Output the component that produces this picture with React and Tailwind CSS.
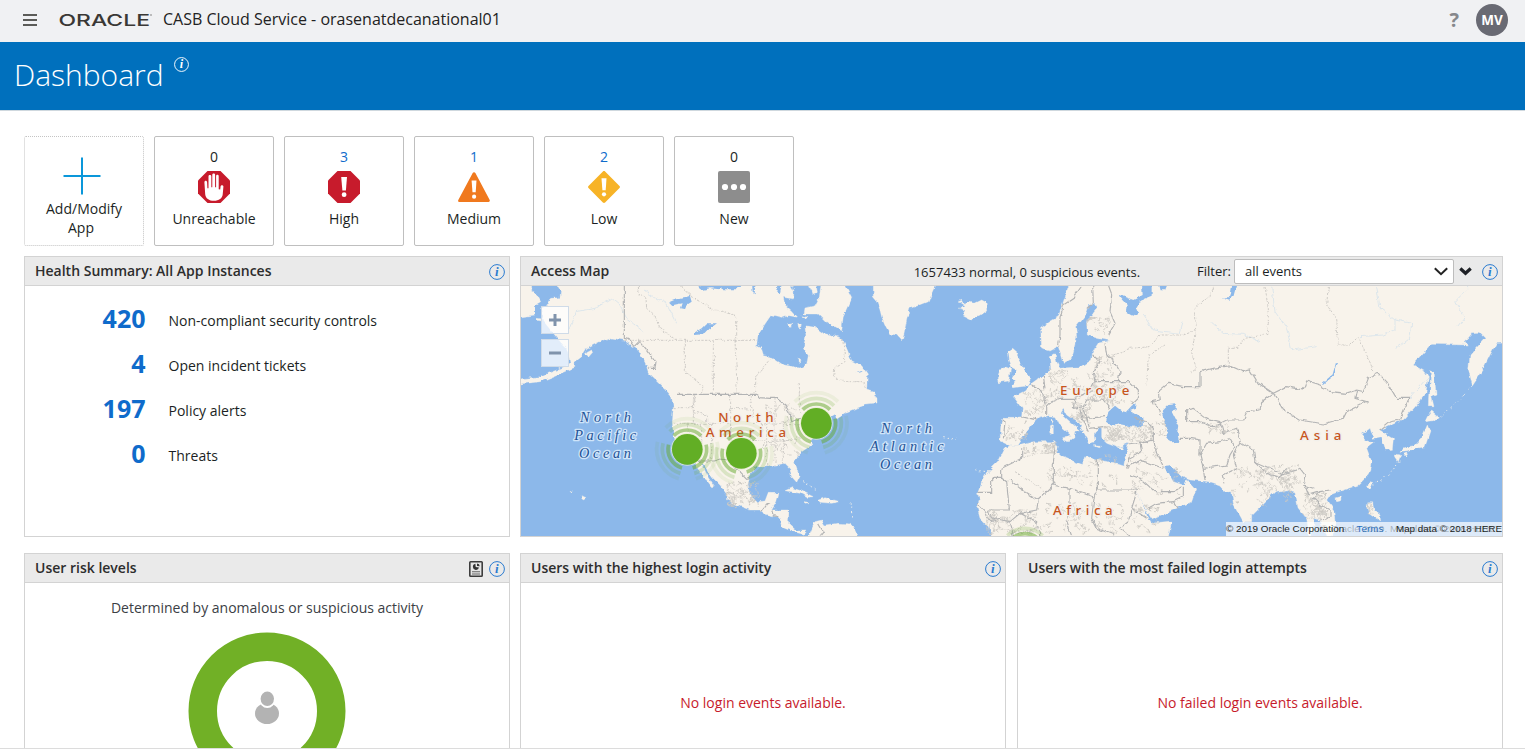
import React from "react";

const WATER = "#8cb8ea";
const LAND = "#f8f3eb";

/* ---------- small icons ---------- */

function InfoIcon({ size = 16, color = "#2a7bd0", className = "" }) {
  return (
    <svg width={size} height={size} viewBox="0 0 16 16" className={`shrink-0 ${className}`}>
      <circle cx="8" cy="8" r="7.4" fill="none" stroke={color} strokeWidth="1" />
      <text x="7.9" y="12.2" textAnchor="middle" fontFamily="Liberation Serif, serif" fontStyle="italic" fontWeight="700" fontSize="13" fill={color}>i</text>
    </svg>
  );
}

function ReportIcon() {
  return (
    <svg width="14" height="16" viewBox="0 0 14 16" className="shrink-0">
      <rect x="0.8" y="0.8" width="12.4" height="14.4" rx="0.8" fill="#e6e6e6" stroke="#3d3d3d" strokeWidth="1.6" />
      <path d="M6.4 2.8a3.1 3.1 0 1 0 3.6 3.8L6.7 6z" fill="#333" />
      <path d="M8 2.4a3 3 0 0 1 2.7 2.9L8 5z" fill="#333" />
      <path d="M3 10.7h8M3 13h8" stroke="#666" strokeWidth="1.1" />
    </svg>
  );
}

function PlusIcon() {
  return (
    <svg width="38" height="38" viewBox="0 0 38 38">
      <path d="M19 0.5v37M0.5 19h37" stroke="#0a97da" strokeWidth="2" />
    </svg>
  );
}

const OCTAGON = "M9.5 0h13L32 9.5v13L22.5 32h-13L0 22.5v-13z";

function HandIcon() {
  return (
    <svg width="32" height="32" viewBox="0 0 32 32">
      <path d={OCTAGON} fill="#c71b2c" />
      <path d="M6.4 11.2c0-2 2.6-2 2.7 0l.3 6h1.1V5.3c0-1.9 2.8-1.9 2.8 0v11h1V3.8c0-1.9 2.8-1.9 2.8 0v12.5h1V5c0-1.8 2.6-1.8 2.6 0v13.2l1.5.3.4-3.2c.3-1.7 3-1.4 2.8.4l-.7 7.8c-.3 3.8-3.9 6.3-8.7 6.3-5.1 0-8.4-2.500-8.800-6.600z" fill="#fff" />
    </svg>
  );
}

function HighIcon() {
  return (
    <svg width="32" height="32" viewBox="0 0 32 32">
      <path d={OCTAGON} fill="#c71b2c" />
      <path d="M13.200 6h5.800l-1.100 13.500h-3.500z" fill="#fff" />
      <circle cx="16.100" cy="23.700" r="2.400" fill="#fff" />
    </svg>
  );
}

function MediumIcon() {
  return (
    <svg width="32" height="32" viewBox="0 0 32 32">
      <path d="M14.700 2c.5-1.100 2.100-1.100 2.700 0l14.300 27c.4.800-.1 1.900-1.100 1.900H1.400c-1 0-1.600-1.100-1.100-1.900z" fill="#f0791e" />
      <path d="M13.600 9.500h4.900l-.8 11.700h-3.200z" fill="#fff" />
      <circle cx="16.100" cy="25.700" r="2.100" fill="#fff" />
    </svg>
  );
}

function LowIcon() {
  return (
    <svg width="32" height="32" viewBox="0 0 32 32">
      <path d="M14.900.5c.6-.6 1.600-.6 2.200 0l14.400 14.400c.6.600.6 1.600 0 2.200L17.100 31.500c-.6.600-1.600.6-2.200 0L.5 17.100c-.6-.6-.6-1.600 0-2.200z" fill="#f7b327" />
      <path d="M13.500 7.300h5l-.8 12h-3.300z" fill="#fff" />
      <circle cx="16" cy="23.300" r="2.100" fill="#fff" />
    </svg>
  );
}

function NewIcon() {
  return (
    <svg width="32" height="32" viewBox="0 0 32 32">
      <rect width="32" height="32" rx="2" fill="#8d8d8d" />
      <circle cx="7" cy="16" r="3.100" fill="#fff" />
      <circle cx="16" cy="16" r="3.100" fill="#fff" />
      <circle cx="25" cy="16" r="3.100" fill="#fff" />
    </svg>
  );
}

/* ---------- map data (three map units per pixel) ---------- */

const LANDS = [
  // Siberia tip
  "3,93 35,93 35,110 50,118 62,140 45,150 45,180 3,188",
  "50,190 68,192 65,198 52,196",
  // North and Central America
  "100,93 122,108 120,128 95,130 85,150 62,160 72,200 100,235 125,265 140,280 146,300 150,325 110,345 60,365 3,374 3,389 60,380 110,360 165,337 160,325 185,305 200,280 230,265 245,257 270,248 310,255 330,268 350,280 365,305 380,335 385,352 430,395 455,425 460,460 457,500 460,540 480,590 500,625 525,628 540,650 550,668 560,675 575,695 583,693 565,665 548,635 540,620 552,630 575,665 600,690 618,715 620,735 650,750 690,765 720,765 735,778 770,785 785,800 790,818 820,830 850,838 858,828 830,828 805,805 807,765 755,765 770,740 777,712 745,712 735,738 710,740 690,720 684,690 690,655 705,636 735,632 770,630 795,625 810,640 815,665 830,682 838,665 823,620 845,590 875,570 870,555 900,530 925,490 945,478 950,492 985,470 1010,460 1035,450 1068,447 1068,428 1060,412 1040,405 1042,357 1025,332 995,317 980,280 968,252 960,247 910,235 885,217 855,212 858,242 850,277 865,302 860,327 840,339 790,330 755,307 730,302 723,279 710,272 713,242 735,207 752,182 785,190 805,182 830,187 815,170 795,152 790,127 820,132 822,107 800,93",
  // Baffin Island and the islands of Hudson Strait
  "905,93 898,127 885,152 855,159 852,177 895,177 920,202 965,227 970,182 985,150 995,127 965,93",
  "862,93 876,118 892,112 885,93",
  "804,207 818,203 815,217 806,215", "834,210 844,208 841,222 835,220", "846,182 860,187 855,194", "836,312 844,318 838,322",
  // Greenland and Iceland
  "1060,93 1060,125 1070,137 1080,165 1085,185 1098,215 1110,237 1130,240 1145,257 1152,235 1160,195 1170,160 1200,150 1225,140 1235,115 1255,93",
  "1315,140 1330,150 1318,160 1335,165 1330,180 1355,193 1380,180 1400,165 1398,142 1385,135 1365,145 1345,142 1330,148 1325,136",
  // Caribbean and South America
  "795,707 815,698 845,708 880,725 862,727 840,715", "895,735 915,728 957,740 935,745 900,742", "852,740 868,742 860,745",
  "855,843 885,800 905,795 915,810 955,805 985,806 1000,815 1025,843",
  "183,722 195,728 192,735 186,732", "150,706 158,708 155,711",
  "200,290 215,282 218,292 205,307 197,300",
  // Africa
  "1425,843 1405,815 1380,790 1372,760 1378,735 1373,715 1385,680 1400,655 1435,620 1455,580 1470,572 1505,570 1540,560 1600,560 1615,575 1610,590 1625,605 1685,628 1700,605 1730,615 1795,625 1818,632 1840,690 1860,730 1880,780 1893,805 1955,798 1940,843",
  // Eurasia
  "1445,490 1485,490 1505,485 1507,462 1480,425 1520,405 1535,385 1570,360 1593,345 1588,305 1604,295 1610,320 1620,340 1685,335 1700,325 1715,315 1718,290 1735,264 1770,258 1732,250 1702,240 1700,200 1732,160 1725,148 1705,150 1695,180 1667,215 1670,250 1655,310 1630,325 1615,275 1590,288 1565,282 1562,220 1590,200 1615,185 1630,140 1655,93 2946,93 2946,260 2930,262 2910,300 2890,340 2857,390 2846,345 2850,300 2895,250 2880,235 2855,236 2835,260 2845,270 2735,268 2680,330 2715,350 2725,365 2718,410 2690,450 2655,490 2635,500 2580,525 2600,540 2620,552 2617,583 2597,585 2585,545 2560,550 2550,520 2523,540 2535,555 2560,565 2540,580 2555,620 2545,660 2515,690 2455,710 2430,720 2420,735 2445,770 2448,800 2430,843 2415,825 2398,795 2385,790 2370,843 2360,790 2335,760 2325,710 2300,705 2265,710 2240,735 2215,760 2195,780 2195,800 2170,800 2140,745 2135,710 2110,712 2100,690 2070,680 2010,675 1985,665 1950,630 1932,632 1960,680 1990,690 2000,675 2027,705 2015,740 1970,760 1895,795 1880,770 1850,710 1815,645 1812,625 1825,565 1795,578 1760,565 1745,550 1745,520 1735,515 1722,540 1725,560 1710,565 1690,530 1670,500 1640,480 1630,462 1622,475 1650,500 1678,525 1665,525 1662,545 1640,560 1635,545 1655,540 1620,510 1608,485 1585,482 1555,490 1540,505 1520,530 1495,570 1470,572 1440,558 1442,520",
  // British Isles
  "1462,290 1478,280 1495,295 1490,305 1505,330 1522,355 1532,370 1525,392 1480,398 1475,390 1490,380 1478,370 1490,345 1472,335 1465,315",
  "1440,345 1455,335 1472,342 1465,378 1435,383 1432,368",
  // Mediterranean islands
  "1588,515 1600,512 1600,535 1590,538", "1592,492 1600,495 1597,508", "1625,548 1655,545 1648,560 1630,556", "1720,572 1745,574 1738,578", "1795,580 1810,574 1805,584",
  // Japan, Sakhalin, Taiwan, Philippines, Hainan
  "2732,347 2742,350 2748,420 2735,425 2742,455 2728,455 2730,400",
  "2735,468 2755,485 2740,497 2715,500 2722,485",
  "2722,510 2730,530 2715,575 2690,580 2665,590 2640,592 2650,578 2685,572 2705,550",
  "2625,597 2642,600 2635,620 2628,610", "2648,598 2665,594 2658,604",
  "2548,680 2558,682 2550,705 2543,695",
  "2545,740 2558,740 2562,765 2580,780 2582,797 2560,785 2545,775 2540,755",
  "2445,730 2465,724 2460,738 2450,740",
];

const INLAND_WATER = [
  // White Sea, Ob
  "1795,120 1815,125 1840,135 1868,120 1865,93 1895,93 1895,125 1858,140 1850,160 1855,172 1840,182 1818,170 1820,150",
  "1912,93 1950,93 1935,106 1922,106", "2108,130 2130,130 2140,93 2155,93 2140,125 2128,137",
  // Black Sea, Azov, Caspian
  "1758,500 1765,470 1785,452 1805,468 1820,472 1835,455 1850,445 1848,458 1830,465 1870,490 1872,512 1840,515 1800,508 1775,512",
  "1925,470 1945,450 1970,448 1970,465 1955,470 1975,510 1972,530 1978,560 1955,562 1935,550 1945,530 1935,500",
  // Canadian lakes and Arctic channels
  "450,140 480,128 510,123 515,140 500,150 495,163 480,160 485,145 460,150",
  "520,235 545,220 560,205 588,205 565,222 550,238 525,240",
  "533,97 570,93 620,93 600,103 570,100 545,105", "595,93 672,93 650,103 610,103", "695,93 708,93 704,115 698,110",
  "765,93 788,93 780,115 770,108",
  "1540,520 1545,517 1548,525", "1005,355 1030,344 1020,352",
];

const BORDERS = [
  "313,93 313,250 330,255 345,275 360,260 385,290 408,320 405,340 385,340",
  "468,418 708,418 720,428 750,430 770,430 795,450 810,475 815,500 840,490",
  "500,625 545,618 580,618 600,612 625,615 645,640 660,650 680,670 690,668",
  "725,770 740,750 750,745", "755,765 760,782 775,785", "895,805 910,830 900,843",
  "1920,480 1915,460 1895,440 1918,435 1915,410 1945,385 1990,395 2040,395 2040,350 2080,340 2130,332 2170,350 2190,345 2215,385 2260,415",
  "2260,415 2300,395 2350,405 2360,378 2400,390 2430,410 2480,415 2510,405 2530,410 2545,370 2575,355 2600,380 2630,430 2667,430 2650,470 2640,495 2610,500 2580,525",
  "2260,415 2290,465 2340,495 2410,507 2470,490 2480,470 2540,440 2505,430 2510,405",
  "2260,415 2225,440 2220,465 2180,470 2170,495 2120,495 2080,515 2040,500 2000,500 2000,465 2020,460 2060,490 2100,500",
  "2100,500 2110,535 2150,520 2160,560 2200,585 2205,620 2250,640 2290,660 2340,640 2355,660 2350,690 2380,700",
  "1978,550 2010,550 2040,555 2040,600 2050,640 2055,675", "2040,600 2060,565 2100,560 2130,550 2145,575 2130,600 2120,630 2050,640",
  "2160,560 2140,600 2150,640 2110,660 2115,685",
  "2205,620 2240,655 2280,668 2300,640", "2355,690 2365,720 2400,710 2430,705",
  "2400,710 2380,730 2400,750 2430,765 2430,790 2400,795",
  "1718,93 1720,145 1700,160", "1765,93 1775,120 1770,170 1785,205 1765,240", "1685,93 1660,130 1630,150 1620,190 1620,240 1615,275",
  "1755,265 1760,300 1780,320 1800,350 1795,380 1830,380 1855,405 1855,430 1835,450",
  "1718,300 1740,320 1720,350 1725,380 1795,380", "1725,380 1710,410 1665,430 1620,430 1595,440 1580,455",
  "1535,390 1570,410 1580,455 1580,480", "1570,360 1575,400", "1665,430 1660,460 1690,455 1700,435 1750,435 1770,460",
  "1690,455 1700,490 1755,485", "1700,490 1710,520 1750,515", "1680,465 1690,500 1705,530",
  "1445,495 1455,500 1450,550", "1507,485 1550,495",
  "1840,490 1880,500 1900,520 1900,555 1860,565 1825,570", "1900,555 1915,600 1930,635", "1860,565 1865,590 1830,610 1820,640",
  "1820,640 1860,615 1930,640", "1830,660 1860,670 1905,710 1960,710 1985,695", "1885,760 1910,745 1960,740 1975,760", "1960,740 1990,725 1990,695",
  "1732,615 1732,705 1852,705", "1732,705 1722,727 1650,700 1600,690", "1605,575 1600,620 1600,690 1555,735 1500,700 1470,675",
  "1505,580 1505,610 1445,640 1445,670 1415,670 1415,712 1373,712", "1445,670 1460,680 1468,765 1400,765", "1555,735 1550,765 1500,775 1470,800",
  "1650,700 1650,770 1640,800 1655,843", "1722,727 1715,790 1730,820 1790,843", "1852,705 1835,760 1825,800 1800,820 1830,843",
  "1835,760 1880,790", "1372,745 1395,770 1400,790 1425,800", "1400,765 1420,790 1470,800 1480,843", "1500,775 1550,800 1560,843",
];

const DASHED = [
  "355,93 358,120 378,130 380,160 405,185 420,220 465,250", "313,256 710,256", "493,256 493,350 545,390 545,418", "580,256 580,418", "645,256 652,418",
  "485,93 500,115 560,150 585,168 647,180 647,256", "752,310 707,365 707,415",
  "460,458 520,458 525,418", "520,418 520,505 460,505", "520,470 560,480 560,505", "520,505 630,505", "575,505 575,615", "632,418 632,505 630,560", "632,460 690,462", "690,418 700,490", "545,505 545,570 510,540 500,505",
  "630,560 740,555", "740,470 740,630", "765,430 765,630", "790,500 790,625", "700,505 850,510", "745,560 830,555",
  "968,250 975,320 945,335 940,365 970,380 1032,380 1036,400", "838,385 838,470 860,490",
  "1780,300 1830,280 1890,275 1920,240 1990,240 2030,225 2025,160 2080,110 2080,93",
  "1880,390 1885,300 1935,270", "2026,225 2015,300 2030,340 2015,350",
  "2425,93 2420,150 2450,190 2455,270 2490,270 2515,245 2540,300 2560,350",
  "2235,93 2245,160 2245,235 2205,245 2170,250 2155,280 2125,280 2125,330",
  "1485,650 1580,710", "1620,660 1730,665", "1500,610 1540,600 1540,560", "1850,640 1900,665 1930,720",
];

const RIVERS = [
  "2570,93 2580,160 2625,195 2625,225 2590,240 2520,245", "2625,195 2675,205 2670,250 2630,280",
  "2255,93 2265,170 2300,220 2315,285 2390,275", "1870,180 1900,225 1980,235 1990,200", "2075,205 2110,235 2170,238 2220,260",
  "150,220 170,170 225,160 275,130 300,150 320,190 370,230", "372,105 400,125 440,145 470,205",
  "2850,93 2805,140 2835,190 2815,215", "2725,365 2675,420 2670,435",
];

// Areas where small administrative lines are dense: x, y, width, height, count
const DENSE = [
  [1590, 345, 165, 90, 46], [1510, 405, 75, 75, 18], [1452, 495, 70, 60, 14], [1755, 515, 140, 45, 46],
  [1640, 445, 70, 60, 24], [1700, 390, 140, 60, 30], [1700, 190, 70, 60, 12], [1620, 600, 170, 100, 18],
  [1510, 565, 100, 30, 26], [1400, 765, 150, 70, 46], [1560, 745, 250, 90, 44], [1830, 580, 150, 140, 22],
  [2350, 715, 70, 75, 40], [2130, 630, 190, 120, 38], [620, 680, 95, 75, 44], [2210, 630, 130, 55, 28],
  [2070, 505, 70, 30, 14], [1570, 640, 50, 50, 5], [730, 450, 110, 150, 20], [2545, 742, 18, 35, 6], [1840, 750, 80, 80, 14],
  [1850, 500, 90, 45, 12], [1725, 300, 55, 60, 12],
];

function buildDensePaths() {
  let seed = 17;
  const rnd = () => {
    seed = (seed * 16807) % 2147483647;
    return seed / 2147483647;
  };
  return DENSE.map(([x, y, w, h, n]) => {
    let d = "";
    for (let i = 0; i < n; i++) {
      let px = x + rnd() * w;
      let py = y + rnd() * h;
      d += `M${px.toFixed(0)} ${py.toFixed(0)}`;
      for (let k = 0; k < 4; k++) {
        px = Math.min(x + w, Math.max(x, px + (rnd() - 0.5) * 26));
        py = Math.min(y + h, Math.max(y, py + (rnd() - 0.5) * 26));
        d += `L${px.toFixed(0)} ${py.toFixed(0)}`;
      }
    }
    return d;
  });
}

const DENSE_PATHS = buildDensePaths();

function arc(r, from, to) {
  const p = (a) => [(r * Math.cos((a * Math.PI) / 180)).toFixed(1), (r * Math.sin((a * Math.PI) / 180)).toFixed(1)];
  const [x1, y1] = p(from);
  const [x2, y2] = p(to);
  return `M${x1} ${y1}A${r} ${r} 0 0 1 ${x2} ${y2}`;
}

function Marker({ x, y }) {
  const rings = [[58, 0.5], [75, 0.2], [92, 0.08]];
  return (
    <g transform={`translate(${x} ${y})`}>
      {rings.map(([r, o]) => (
        <path key={r} d={arc(r, -135, -45) + arc(r, -14, 74) + arc(r, 106, 194)} fill="none" stroke="#62a82a" strokeWidth="11" opacity={o} />
      ))}
      <circle r="48" fill="none" stroke="#e6efcf" strokeWidth="3" opacity="0.8" />
      <circle r="46" fill="#62ae25" />
    </g>
  );
}

function MapLabel({ x, y, w, children, ocean }) {
  return (
    <text
      x={x} y={y} textLength={w}
      fontFamily={ocean ? "Liberation Serif, serif" : "Noto Sans, sans-serif"}
      fontStyle={ocean ? "italic" : "normal"}
      fontWeight={ocean ? 400 : 500}
      fontSize={ocean ? 43 : 40}
      fill={ocean ? "#1d5296" : "#c8551c"}
      stroke={ocean ? "#cfe4f9" : "#f2f0ec"}
      strokeWidth="8" strokeLinejoin="round" paintOrder="stroke"
    >
      {children}
    </text>
  );
}

function WorldMap() {
  return (
    <svg width="981" height="250" viewBox="3 93 2943 750" className="block">
      <defs>
        <filter id="rough" filterUnits="userSpaceOnUse" x="-20" y="70" width="3000" height="800">
          <feTurbulence type="fractalNoise" baseFrequency="0.05" numOctaves="3" seed="4" result="n" />
          <feDisplacementMap in="SourceGraphic" in2="n" scale="14" xChannelSelector="R" yChannelSelector="G" />
        </filter>
      </defs>
      <rect x="3" y="93" width="2943" height="750" fill={WATER} />
      <g filter="url(#rough)">
        <g fill={LAND} stroke={LAND} strokeWidth="1">
          {LANDS.map((p) => <polygon key={p} points={p.replace(/(^|\s)(\d+),93(?=\s|$)/g, "$1$2,70").replace(/,843(?=\s|$)/g, ",870").replace(/(^|\s)3,/g, "$1-15,").replace(/2946,/g, "2970,")} />)}
        </g>
        <g fill={WATER}>
          {INLAND_WATER.map((p) => <polygon key={p} points={p.replace(/,93(?=\s|$)/g, ",70")} />)}
        </g>
        <polyline points="2410,385 2440,360 2450,325" fill="none" stroke={WATER} strokeWidth="5" />
        <g fill="none" stroke="#cfe0ec" strokeWidth="2">
          {RIVERS.map((p) => <polyline key={p} points={p} />)}
        </g>
        <g fill="none" stroke="#c6c4c0" strokeWidth="2.500" strokeDasharray="7 4">
          {DASHED.map((p) => <polyline key={p} points={p} />)}
        </g>
        <g fill="none" stroke="#cbc8c3" strokeWidth="2.200" strokeDasharray="9 3">
          {DENSE_PATHS.map((d) => <path key={d.slice(0, 20)} d={d} />)}
        </g>
        <g fill="none" stroke="#b2b3b4" strokeWidth="3.400">
          {BORDERS.map((p) => <polyline key={p} points={p} />)}
        </g>
        <g fill="none" stroke={LAND} strokeWidth="3" strokeDasharray="4 9">
          <path d="M2857 392L2800 455L2755 488M2640 620L2600 665L2560 690M850 680L890 705M990 745L998 790M1270 545L1310 550M1365 645L1400 650" />
        </g>
      </g>
      <MapLabel x={180} y={502} w={153} ocean>North</MapLabel>
      <MapLabel x={163} y={555} w={185} ocean>Pacific</MapLabel>
      <MapLabel x={177} y={609} w={156} ocean>Ocean</MapLabel>
      <MapLabel x={1083} y={533} w={153} ocean>North</MapLabel>
      <MapLabel x={1050} y={587} w={221} ocean>Atlantic</MapLabel>
      <MapLabel x={1080} y={641} w={156} ocean>Ocean</MapLabel>
      <MapLabel x={595} y={500} w={166}>North</MapLabel>
      <MapLabel x={557} y={545} w={241}>America</MapLabel>
      <MapLabel x={1620} y={419} w={208}>Europe</MapLabel>
      <MapLabel x={1599} y={779} w={179}>Africa</MapLabel>
      <MapLabel x={2340} y={556} w={124}>Asia</MapLabel>
      <Marker x={502} y={583} />
      <Marker x={664} y={595} />
      <Marker x={889} y={505} />
      <g fill="none" stroke="#62a82a" strokeWidth="11">
        <path transform="translate(1515 895)" d={arc(59, -135, -45)} opacity="0.5" />
        <path transform="translate(1515 895)" d={arc(75, -135, -45)} opacity="0.2" />
      </g>
    </svg>
  );
}

/* ---------- page parts ---------- */

function PanelHeader({ title, children }) {
  return (
    <div className="flex h-[29px] shrink-0 items-center border-b border-[#d3d3d3] bg-[#eaeaea] pl-[10px] pr-1">
      <h2 className="grow text-sm leading-5 font-semibold text-[#2d2d2d]">{title}</h2>
      {children}
    </div>
  );
}

function Panel({ className = "", children }) {
  return <section className={`flex flex-col border border-[#d3d3d3] bg-white ${className}`}>{children}</section>;
}

function StatusCard({ count, label, icon }) {
  return (
    <div className="flex h-[110px] w-[120px] flex-col items-center rounded-[2px] border border-[#bfbfbf] pt-[10px]">
      <span className={`text-sm leading-5 ${count ? "text-[#0f6bcb]" : "text-[#1b1f24]"}`}>{count}</span>
      <span className="mt-1">{icon}</span>
      <span className="mt-[6px] text-sm leading-5">{label}</span>
    </div>
  );
}

const CARDS = [
  { count: 0, label: "Unreachable", icon: <HandIcon /> },
  { count: 3, label: "High", icon: <HighIcon /> },
  { count: 1, label: "Medium", icon: <MediumIcon /> },
  { count: 2, label: "Low", icon: <LowIcon /> },
  { count: 0, label: "New", icon: <NewIcon /> },
];

const HEALTH = [
  ["420", "Non-compliant security controls"],
  ["4", "Open incident tickets"],
  ["197", "Policy alerts"],
  ["0", "Threats"],
];

function TopBar() {
  return (
    <header className="flex h-[42px] shrink-0 items-center bg-[#f0f1f3] pr-[17px] pb-[2px] pl-[23px]">
      <svg width="14" height="12" viewBox="0 0 14 12">
        <path d="M0 1h14M0 6h14M0 11h14" stroke="#5b5b58" strokeWidth="2" />
      </svg>
      <svg width="94" height="18" viewBox="0 0 94 18" className="ml-[22px]">
        <text x="-0.5" y="15" textLength="91.500" lengthAdjust="spacingAndGlyphs" fontFamily="Inter, sans-serif" fontWeight="500" fontSize="16.500" fill="#3a3835">ORACLE</text>
        <circle cx="92" cy="4" r="0.800" fill="#777" />
      </svg>
      <h1 className="ml-[10px] pb-[2px] text-base leading-6 text-[#222]">CASB Cloud Service - orasenatdecanational01</h1>
      <span className="ml-auto text-[20px] leading-6 font-bold text-[#86888c]">?</span>
      <span className="ml-[17px] flex h-8 w-8 items-center justify-center rounded-full bg-[#696a73] text-[13.500px] font-bold text-white">MV</span>
    </header>
  );
}

function AccessMap() {
  return (
    <Panel className="h-[281px] w-[983px]">
      <PanelHeader title="Access Map">
        <span className="pt-[2px] text-[13px] leading-5 text-[#1b1f24]">1657433 normal, 0 suspicious events.</span>
        <span className="ml-[57px] pb-px text-[13px] leading-5 text-[#1b1f24]">Filter:</span>
        <span className="mt-px ml-[3px] flex h-[25px] w-[220px] items-center justify-between rounded-[2px] border border-[#bdbdbd] bg-white pr-[5px] pl-[10px] text-[13px]">
          <span className="pt-px">all events</span>
          <svg width="14" height="9" viewBox="0 0 14 9"><path d="M0.800 1.200L7 7.200L13.200 1.200" fill="none" stroke="#222" strokeWidth="2" /></svg>
        </span>
        <svg width="13" height="9" viewBox="0 0 13 9" className="ml-[5px]"><path d="M1.300 1.500L6.500 6.300L11.700 1.500" fill="none" stroke="#1d2025" strokeWidth="3.200" /></svg>
        <InfoIcon className="mt-[2px] ml-[10px]" />
      </PanelHeader>
      <div className="relative h-[250px] overflow-hidden">
        <WorldMap />
        <div className="absolute top-5 left-5 flex flex-col gap-[5px]">
          {["M0 6h12M6 0v12", "M0 6h12"].map((d) => (
            <span key={d} className="flex h-7 w-7 items-center justify-center border border-[#cfdbe8] bg-white/75">
              <svg width="12" height="12" viewBox="0 0 12 12"><path d={d} stroke="#8093ab" strokeWidth="3" /></svg>
            </span>
          ))}
        </div>
        <div className="absolute right-0 bottom-0 h-[14px] w-[276px] bg-white/70 font-['Liberation_Sans',sans-serif] text-[9.900px] leading-[14px] whitespace-nowrap text-[#1b1f24]">
          <span className="absolute right-[6px] text-[#1b1f24]/30">© Oracle 2019. Map data © 2018 HERE</span>
          <div className="relative flex justify-between">
            <span>© 2019 Oracle Corporation</span>
            <span className="text-[#2a6fbe]">Terms</span>
            <span>Map data © 2018 HERE</span>
          </div>
        </div>
      </div>
    </Panel>
  );
}

export default function App() {
  return (
    <div className="flex h-[749px] w-[1525px] flex-col overflow-hidden bg-white font-['Open_Sans','Noto_Sans',sans-serif] text-[#1b1f24]">
      <TopBar />
      <div className="flex h-[69px] shrink-0 items-start border-b border-[#cfd8de] bg-[#0070bd] pl-[14px] text-white">
        <span className="pt-[11px] text-[30px] leading-[44px] font-light">Dashboard</span>
        <InfoIcon size={15} color="#fff" className="mt-[15px] ml-[10px]" />
      </div>

      <main className="h-[637px] shrink-0 overflow-hidden pt-[25px] pl-6">
        <div className="flex gap-[10px]">
          <div className="flex h-[110px] w-[120px] flex-col items-center rounded-[2px] border border-dotted border-[#c4c4c4] pt-[20px] pr-1 text-center text-sm leading-[19px]">
            <PlusIcon />
            <span className="mt-[4px] ml-1">Add/Modify<br /><span className="-ml-1.5">App</span></span>
          </div>
          {CARDS.map((c) => <StatusCard key={c.label} {...c} />)}
        </div>

        <div className="mt-[10px] flex gap-[10px]">
          <Panel className="h-[281px] w-[486px]">
            <PanelHeader title="Health Summary: All App Instances"><InfoIcon className="mt-[2px]" /></PanelHeader>
            <div className="flex flex-col pt-[11px]">
              {HEALTH.map(([n, label]) => (
                <div key={label} className="flex h-[45px] items-center">
                  <span className="w-[120.5px] pb-1 text-right text-[25px] leading-8 font-bold text-[#0f6bcb]">{n}</span>
                  <span className="ml-[23px] pt-[3px] text-sm leading-5">{label}</span>
                </div>
              ))}
            </div>
          </Panel>
          <AccessMap />
        </div>

        <div className="mt-4 flex">
          <Panel className="h-[281px] w-[486px]">
            <PanelHeader title="User risk levels">
              <span className="mt-[2px] mr-[6px]"><ReportIcon /></span>
              <InfoIcon className="mt-[2px]" />
            </PanelHeader>
            <div className="flex flex-col items-center pt-[15px]">
              <p className="text-sm leading-5 text-[#3b4045]">Determined by anomalous or suspicious activity</p>
              <svg width="158" height="158" viewBox="0 0 158 158" className="mt-[14px]">
                <circle cx="79" cy="79" r="64.250" fill="none" stroke="#71b026" strokeWidth="28.500" />
                <ellipse cx="79" cy="81.500" rx="12" ry="10.500" fill="#b3b3b3" />
                <ellipse cx="79.300" cy="67.500" rx="8" ry="8.600" fill="#fff" />
                <ellipse cx="79.300" cy="66.800" rx="6.700" ry="7.200" fill="#b3b3b3" />
              </svg>
            </div>
          </Panel>
          <Panel className="ml-[10px] h-[281px] w-[486px]">
            <PanelHeader title="Users with the highest login activity"><InfoIcon className="mt-[2px]" /></PanelHeader>
            <p className="pt-[110px] text-center text-sm leading-5 text-[#c71b2c]">No login events available.</p>
          </Panel>
          <Panel className="ml-[11px] h-[281px] w-[486px]">
            <PanelHeader title="Users with the most failed login attempts"><InfoIcon className="mt-[2px]" /></PanelHeader>
            <p className="pt-[110px] text-center text-sm leading-5 text-[#c71b2c]">No failed login events available.</p>
          </Panel>
        </div>
      </main>
      <div className="h-px shrink-0 bg-[#dcdcdc]" />
    </div>
  );
}
